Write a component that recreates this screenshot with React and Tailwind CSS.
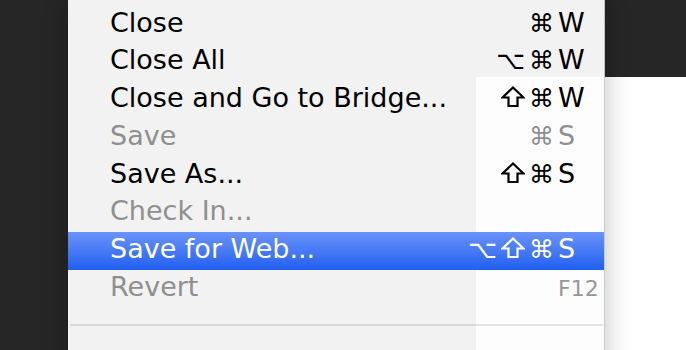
import React from 'react';

const ShiftIcon = () => (
    <svg width="24" height="21" viewBox="0 0 24 21" className="shrink-0">
        <path
            d="M12 1.5 L22.5 11.5 H16.5 V20 H7.5 V11.5 H1.5 Z"
            fill="none"
            stroke="currentColor"
            strokeWidth="2.2"
            strokeLinejoin="miter"
        />
    </svg>
);

const items = [
    { label: 'Close', mods: ['⌘'], key: 'W' },
    { label: 'Close All', mods: ['⌥', '⌘'], key: 'W' },
    { label: 'Close and Go to Bridge...', mods: ['⇧', '⌘'], key: 'W' },
    { label: 'Save', mods: ['⌘'], key: 'S', disabled: true },
    { label: 'Save As...', mods: ['⇧', '⌘'], key: 'S' },
    { label: 'Check In...', mods: [], key: '', disabled: true },
    { label: 'Save for Web...', mods: ['⌥', '⇧', '⌘'], key: 'S', active: true },
    { label: 'Revert', mods: [], key: 'F12', disabled: true, smallKey: true },
];

function MenuRow({ item }) {
    let color = 'text-black';
    if (item.disabled) color = 'text-[#8f8f8f]';
    if (item.active) color = 'text-white';

    return (
        <div
            className={
                'flex h-[37.7px] w-full items-baseline pl-[42px] pr-[6px] pt-[3px] ' +
                color +
                (item.active ? ' bg-gradient-to-b from-[#6a92f8] to-[#1f5ef0]' : '')
            }
        >
            <span className="flex-1 whitespace-nowrap">{item.label}</span>
            <span className="flex items-baseline gap-[4px] text-[25px]">
                {item.mods.map((m, i) =>
                    m === '⇧' ? <ShiftIcon key={i} /> : <span key={i}>{m}</span>
                )}
            </span>
            <span
                className={
                    'ml-[4px] w-[40px] whitespace-nowrap' +
                    (item.smallKey ? ' text-[22px] text-[#969696]' : '')
                }
            >
                {item.key}
            </span>
        </div>
    );
}

export default function App() {
    return (
        <div className="relative h-[350px] w-[686px] overflow-hidden bg-[#262626] font-['DejaVu_Sans',sans-serif] text-[27px] leading-none">
            {/* document window behind the menu */}
            <div className="absolute bottom-0 left-[476px] right-0 top-[77px] bg-white" />

            <div className="absolute left-[68px] top-0 w-[537px] border-r border-black/20 bg-[rgba(253,253,253,0.954)] pb-16 pt-[5.8px] shadow-[0_0_24px_rgba(0,0,0,0.25)]">
                {items.map((item) => (
                    <MenuRow key={item.label} item={item} />
                ))}
                <div className="ml-[2px] mr-px mt-[16.6px] h-[2px] bg-black/10" />
            </div>
        </div>
    );
}
